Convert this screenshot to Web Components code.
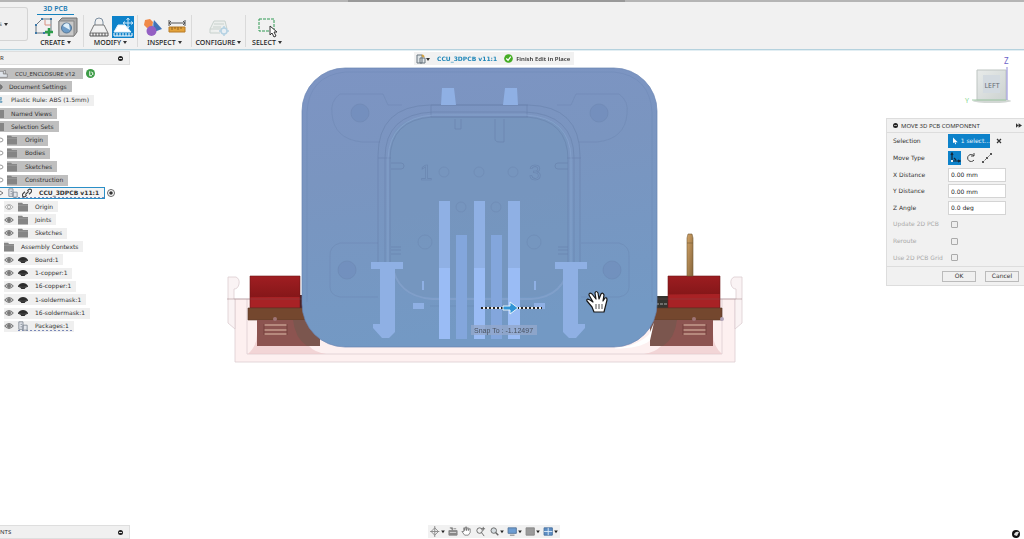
<!DOCTYPE html>
<html lang="en">
<head>
<meta charset="utf-8">
<title>3D PCB</title>
<style>
html,body{margin:0;height:100%;background:#fff}
body{font:6px/8px "DejaVu Sans","Noto Sans",sans-serif;color:#333;overflow:hidden}
</style>
</head>
<body>
<cad-app></cad-app>
<script>
const define=(name,css,html,setup)=>{
  const t=document.createElement('template');
  t.innerHTML=`<style>*{box-sizing:border-box}svg{display:block}button,input{font:inherit;color:inherit;margin:0}button{border:0;padding:0;background:none}${css}</style>${html}`;
  customElements.define(name,class extends HTMLElement{
    constructor(){super();this.attachShadow({mode:'open'}).append(t.content.cloneNode(true));}
    connectedCallback(){if(setup)setup(this,this.shadowRoot);}
  });
};

/* Shared 12x12 glyphs */
const glyphs={
  eye:'<path d="M1 6Q6 0 11 6Q6 12 1 6Z" fill="#d4d4d4" stroke="#777" stroke-width="1.300"/><circle cx="6" cy="6" r="2.400" fill="#777"/>',
  off:'<path d="M1 6Q6 0 11 6Q6 12 1 6Z" fill="none" stroke="#aaa"/><circle cx="6" cy="6" r="2" fill="none" stroke="#aaa"/>',
  folder:'<path d="M0 1h5l1 1.500h6v9H0Z" fill="#858585"/><path d="M0 4h12" stroke="#a5a5a5" stroke-width=".7"/>',
  body:'<path d="M0 6Q2 2.500 6 2.500T12 6v1L9 8 8 9.500H4L3 8 0 7Z" fill="#2c2c2c"/><path d="M1 6.500l5 1 5-1" stroke="#666" stroke-width=".6" fill="none"/>',
  part:'<path d="M1 1h5v9H1zM6 5h5v6H6zM3 4h2M3 7h2" fill="#e2e5ea" stroke="#7d8590"/>',
  link:'<path d="M5.500 8.500L4 10a2 2 0 0 1-3-3l2.500-2.500M6.500 3.500L8 2a2 2 0 0 1 3 3L8.500 7.500M4 8l4-4" fill="none" stroke="#444" stroke-width="1.500"/>',
  doc:'<path d="M0 2h5v4h6v5H0M5 2l3-2v6" fill="#dfe4ea" stroke="#777"/>',
  gear:'<path d="M-4 6a4 4 0 1 0 8 0a4 4 0 1 0-8 0M0 1v10M-4 6h9" fill="none" stroke="#555" stroke-width="1.600"/>',
  rule:'<path d="M0 1h3v4H0M0 8h4v3H0M0 5v3" fill="#8cb5cf" stroke="#4a89ab"/>'
};
const glyph=(n,s=10)=>`<svg class="g" width="${s}" height="${s}" viewBox="0 0 12 12">${glyphs[n]}</svg>`;

define('ribbon-group',`
:host{display:flex;flex-direction:column;justify-content:flex-end;align-items:center;border-right:1px solid #dadada;height:32px;width:54px}
:host([first]){width:56px}:host([last]){border:0;width:42px}
.icons{display:flex;gap:2px;height:22px;align-items:center}
button{font:500 7px/8px "Noto Sans",sans-serif;color:#222;white-space:nowrap;height:9px}
i{display:inline-block;border:2px solid transparent;border-top:3px solid #333;border-bottom:0;margin-left:2px;vertical-align:1px}
`,`<div class="icons"><slot></slot></div><button><span></span><i></i></button>`,(h,r)=>r.querySelector('span').textContent=h.getAttribute('label'));

define('ribbon-bar',`
:host{display:grid;grid-template-columns:28px 1fr;height:50px;background:linear-gradient(90deg,#b5b5b5 34%,#999 34% 61%,#b5b5b5 61%) 0 0/100% 2px no-repeat #f1f1f1;padding-top:2px;border-bottom:1px solid #b5d2de;box-shadow:0 1px #e2eef3}
.space{display:flex;align-items:center;gap:2px;height:34px;margin-top:5px;width:28px;border:1px solid #d4d4d4;border-left:0;border-radius:0 3px 3px 0;background:#efefef}
.space span{width:2px;overflow:hidden;direction:rtl}
.space i{border:2px solid transparent;border-top:3px solid #333;border-bottom:0}
.tools{display:flex;flex-direction:column}
.tab{align-self:flex-start;margin-left:9px;width:37px;height:13px;border-bottom:1px solid #1682bd;color:#1779b1;font:600 7px/9px "Noto Sans",sans-serif;text-align:center;padding-top:2px;text-decoration:none}
.groups{display:flex}
ribbon-group svg{width:22px;height:22px}
.on{background:#0d82ca}
`,`
<button class="space"><span>s</span><i></i></button>
<div class="tools"><a class="tab" href="#">3D PCB</a><div class="groups">
<ribbon-group first label="CREATE">
<svg viewBox="0 0 22 22"><path d="M3 17V9l6-6h9v12M3 17h12" fill="none" stroke="#6b7680" stroke-width="1"/><path d="M12 4v5h6" fill="none" stroke="#d89080"/><g fill="#3d78a8"><path d="M2 16h2v2H2zM2 8h2v2H2zM8 2h2v2H8zM17 2h2v2h-2zM10 16h2v2h-2z"/></g><path d="M16 12v8M12 16h8" stroke="#2c9c4b" stroke-width="2.500"/></svg>
<svg viewBox="0 0 22 22"><path d="M2 5l3-3h15v14l-3 4H2Z" fill="#aaa" stroke="#737373"/><path d="M2 5h15v15H2Z" fill="#c9c9c9" stroke="#858585"/><circle cx="9.500" cy="12" r="5" fill="#6d9cc8" stroke="#557796"/><path d="M6 10a4 4 0 0 1 6-2l1 6" fill="#deeffa"/></svg>
</ribbon-group>
<ribbon-group label="MODIFY">
<svg viewBox="0 0 22 22"><path d="M7 6a4 4 0 0 1 8 0v4M7 6v4" fill="none" stroke="#7b8ea0"/><path d="M6 9h10l4 8H2Z" fill="#f2f2f2" stroke="#777"/><path d="M2 17v3h18v-3M5 17v3M8 17v3M11 17v3M14 17v3M17 17v3" stroke="#555" fill="none"/></svg>
<svg class="on" viewBox="0 0 22 22"><path d="M6 9h7l6 7H2Z" fill="#fff" stroke="#e3f1fa"/><path d="M2 17v3h18v-3M5 17v3M8 17v3M11 17v3M14 17v3M17 17v3" stroke="#fff" fill="none"/><path d="M16 2v10M11 7h10M14.500 4L16 2l1.500 2M14.500 10l1.500 2 1.500-2M13 5.500L11 7l2 1.500M19 5.500L21 7l-2 1.500" stroke="#c6e4f7" fill="none"/></svg>
</ribbon-group>
<ribbon-group label="INSPECT">
<svg viewBox="0 0 22 22"><path d="M12 4l8 9-8 3Z" fill="#4273b6"/><path d="M12 4l-3 10 3 2Z" fill="#6e9bd2"/><path d="M3 4l5-1 3 3-1 5-5 1-3-3Z" fill="#f08a49"/><circle cx="9.500" cy="15" r="5" fill="#9460c3"/></svg>
<svg viewBox="0 0 22 22"><path d="M3 4v6M19 4v6M3 7h16M5 5L3 7l2 2M17 5l2 2-2 2" stroke="#555" fill="none"/><path d="M3 11h16v5H3Z" fill="#e3a23a" stroke="#b77a26"/><path d="M6 11v3M9 11v2M12 11v3M15 11v2" stroke="#916321"/></svg>
</ribbon-group>
<ribbon-group label="CONFIGURE">
<svg viewBox="0 0 22 22" opacity=".4"><path d="M6 5h11l2 8H2ZM2 13v4h10M6 8h10M5 11h8" fill="#e5eee8" stroke="#8da49a"/><circle cx="16" cy="15" r="3" fill="#dceefa" stroke="#5da5d0" stroke-width="1.500"/><path d="M16 10v2M16 18v2M11 15h2M19 15h2" stroke="#5da5d0" stroke-width="1.500"/></svg>
</ribbon-group>
<ribbon-group last label="SELECT">
<svg viewBox="0 0 22 22"><path d="M3 3h15v12H3Z" fill="none" stroke="#319a55" stroke-dasharray="3 1"/><path d="M14 10v9l2-2 2 4 2-1-2-4h3Z" fill="#fff" stroke="#333"/></svg>
</ribbon-group>
</div></div>`);

define('title-strip',`
:host{display:flex;align-items:center;justify-content:space-between;width:130px;height:14px;background:#f0f0f0;border:1px solid #dedede;border-left:0;padding-right:6px;font:6px/8px "Noto Sans",sans-serif}
button{width:5px;height:5px;border-radius:50%;background:#222;display:grid;place-items:center}
button::after{content:"";width:3px;height:1px;background:#ddd}
`,`<span><slot></slot></span><button aria-label="Collapse"></button>`);

define('tree-row',`
:host{display:flex;align-items:center}
.chip{display:flex;align-items:center;height:11px;background:#efefef;padding-right:5px;white-space:nowrap}
.chip.dark{background:#bfbfbf}
.g{flex:none}
.current{border:1px solid #2b8fc7;border-left:0;background:#f4f4f4;font-weight:700;height:12px}
.caps{font-family:"Noto Sans",sans-serif;padding-right:8px}
.wavy{background-image:repeating-linear-gradient(90deg,#7a88b8 0 2px,transparent 2px 4px);background-size:calc(100% - 14px) 1px;background-position:14px 9px;background-repeat:no-repeat}
`,`<span class="chip"></span>`,(h,r)=>{
  const c=r.querySelector('.chip'),k=h.getAttribute('kind');
  const T=h.getAttribute('label');
  const text=x=>`<span class="t" style="margin-left:${x}px">${T}</span>`;
  const gap='<span style="width:4px"></span>';
  const kinds={
    doc:['dark caps','0',glyph('doc',8)+text(7)],
    gear:['dark','0',glyph('gear',6)+text(3)],
    rule:['light','0',glyph('rule',6)+text(5)],
    set:['dark','0',`<svg class="g" width="4" height="9"><path d="M0 1h4v8H0z" fill="#858585"/></svg>`+text(7)],
    folder:['dark','0',glyph('folder')+text(8)],
    current:['current wavy','0',`<svg class="g" width="4" height="8"><path d="M0 2l3 2-3 2" fill="none" stroke="#777"/></svg>${gap}${glyph('part')}${gap}${glyph('link')}${text(7)}`],
    off:['light','4',glyph('off')+gap+glyph('folder')+text(7)],
    on:['light','4',glyph('eye')+gap+glyph('folder')+text(7)],
    ctx:['light','4',glyph('folder')+text(7)],
    body:['light','4',glyph('eye')+gap+glyph('body')+text(7)],
    pkg:['light wavy','4',glyph('eye')+gap+glyph('part')+text(7)]
  }[k];
  c.className='chip '+kinds[0];h.style.paddingLeft=kinds[1]+'px';c.innerHTML=kinds[2];
  if(k==='folder')c.insertAdjacentHTML('beforebegin','<svg width="7" height="8"><path d="M0 2q3 0 3 2t-3 2" fill="none" stroke="#999"/></svg>');
  if(k==='doc')c.insertAdjacentHTML('afterend','<svg width="9" height="9" viewBox="0 0 12 12" style="margin-left:3px"><circle cx="6" cy="6" r="6" fill="#3d9c47"/><path d="M5 3v6h3M7 4l2 1v3" fill="none" stroke="#fff" stroke-width="1.300"/></svg>');
  if(k==='current')c.insertAdjacentHTML('afterend','<svg width="10" height="10" viewBox="0 0 10 10" style="margin-left:1px"><circle cx="5" cy="5" r="3.500" fill="#fff" stroke="#666"/><circle cx="5" cy="5" r="1.800" fill="#333"/></svg>');
});

define('browser-tree',`:host{display:block}.rows{display:grid;grid-auto-rows:1fr;height:266px;margin-top:2px}`,
`<title-strip>R</title-strip><div class="rows">${[
['doc','CCU_ENCLOSURE v12'],['gear','Document Settings'],['rule','Plastic Rule: ABS (1.5mm)'],['set','Named Views'],['set','Selection Sets'],['folder','Origin'],['folder','Bodies'],['folder','Sketches'],['folder','Construction'],['current','CCU_3DPCB v11:1'],['off','Origin'],['on','Joints'],['on','Sketches'],['ctx','Assembly Contexts'],['body','Board:1'],['body','1-copper:1'],['body','16-copper:1'],['body','1-soldermask:1'],['body','16-soldermask:1'],['pkg','Packages:1']
].map(([k,l])=>`<tree-row kind="${k}" label="${l}"></tree-row>`).join('')}</div>`);

define('edit-bar',`
:host{display:flex;align-items:center;height:13px;width:160px;background:#f1f1f1;padding:0 2px;white-space:nowrap}
a{color:#2288b9;text-decoration:none;margin:0 7px;font-weight:700}
button{display:flex;align-items:center;gap:3px;font:600 6px/8px "Noto Sans",sans-serif}
`,`
<svg width="14" height="10" viewBox="0 0 14 10"><path d="M1 1h5v8H1zM4 4h5v5H4z" fill="#dfe5e8" stroke="#68757e"/><path d="M6 1l2 2" stroke="#d0a040" stroke-width="2"/><path d="M10 4h4l-2 3z" fill="#333"/></svg>
<a href="#">CCU_3DPCB v11:1</a>
<button><svg width="9" height="9" viewBox="0 0 10 10"><circle cx="5" cy="5" r="4.800" fill="#45ad25"/><path d="M2.500 5l2 2 3-4" fill="none" stroke="#fff" stroke-width="1.400"/></svg>Finish Edit in Place</button>`);

define('view-cube',`:host{display:block;width:60px;height:54px}text{font-family:"Noto Sans",sans-serif}`,`
<svg width="60" height="54" viewBox="960 54 60 54">
<defs><linearGradient id="c" x2="1" y2="1"><stop stop-color="#e8ebea"/><stop offset="1" stop-color="#ccd2d0"/></linearGradient></defs>
<ellipse cx="992" cy="101" rx="19" ry="2" fill="#d2d7d4"/>
<path d="M977 70h29v30h-29z" fill="url(#c)" stroke="#bdc4c1"/><path d="M983 75h17v18h-17z" fill="#d3dae0"/>
<path d="M1007 67v33" stroke="#8d87d8"/><path d="M972 100h34" stroke="#a2cda8"/>
<text x="992" y="88" font-size="7" fill="#646b73" text-anchor="middle">LEFT</text>
<text x="1004" y="64" font-size="8" fill="#6b62c8">Z</text><text x="965" y="103" font-size="7" fill="#8ad892">Y</text>
</svg>`);

const mirror=(c,f)=>f+`<g transform="translate(${c} 0) scale(-1 1)">${f}</g>`;
define('model-view',`:host{display:block;min-height:0;min-width:0}svg{width:100%;height:100%}text{font-family:"Liberation Sans",sans-serif}`,`
<svg viewBox="0 51 1024 488" role="img" aria-label="Enclosure model">
<defs>
<linearGradient id="blue" x2=".2" y2="1"><stop stop-color="#7d94c3"/><stop offset=".4" stop-color="#7a95c0"/><stop offset="1" stop-color="#7399c4"/></linearGradient>
<linearGradient id="red" x2=".1" y2="1"><stop stop-color="#a01e22"/><stop offset=".65" stop-color="#861719"/><stop offset=".67" stop-color="#a82225"/><stop offset="1" stop-color="#a82225"/></linearGradient>
<linearGradient id="brass" x2="1" y2="1"><stop stop-color="#d3a466"/><stop offset="1" stop-color="#85643b"/></linearGradient>
</defs>
<g fill="#fdf0f0" stroke="#dccdd0" stroke-width=".8">
<path d="M235 299H735V362H235Z"/><path d="M247 299V354H722V299" fill="none"/>
${mirror(970,'<path d="M228 277h8q4 2 3 7t-5 5v10h1v30l-7-6Z" fill="#faf3f4"/>')}
</g>
<path d="M655 296h13v12h-13z" fill="#34342f"/><path d="M656 304h12" stroke="#aaa" stroke-dasharray="3 1"/>
<path d="M250 276h50v32h-50zM668 276h52v32h-52z" fill="url(#red)" stroke="#701819" stroke-width=".6"/>
<path d="M300 295h8v13h-8z" fill="#4d2225"/>
<path d="M248 308h60v12h-60zM650 308h72v12h-72z" fill="#74472e" stroke="#573929" stroke-width=".6"/>
<path d="M257 320h63v26h-63zM650 320h63v26h-63z" fill="#8c5450"/>
<path d="M293 320q2 18 14 26h13v-26zM677 320q-2 18-14 26h-13v-26z" fill="#7b564e"/>
<path d="M248 354q9-8 9-20v12h52q5 6 17 8zM722 354q-9-8-9-20v12h-52q-5 6-17 8z" fill="#ecc9cb" opacity=".7"/>
<path d="M264 325h23M264 330h23M264 334h23M683 325h23M683 330h23M683 334h23" stroke="#c39b8c" stroke-width="1.300"/>
<path d="M264 324v11M287 324v11M683 324v11M706 324v11" stroke="#75413d"/><circle cx="275" cy="319" r="2" fill="#9f7475"/><circle cx="694" cy="319" r="2" fill="#9f7475"/><circle cx="722" cy="319" r="2" fill="#b0a3b8"/>
<path d="M687 276v-38l1-4h4l1 4v38z" fill="url(#brass)" stroke="#745a38" stroke-width=".6"/><path d="M687 243h6" stroke="#745a38" stroke-width=".6"/>
<path d="M227 299h515" stroke="#7a5155" opacity=".35"/>
<path d="M615 347.500q20 0 34-13l5-12-4 18q-10 8-35 8z" fill="#fff"/>
<rect x="302" y="68" width="355" height="279" rx="43" fill="url(#blue)" stroke="#6984b3" stroke-width=".7"/>
<path d="M307 302V112q2-36 38-40h269q36 4 38 40v190" fill="none" stroke="#6f89b7" stroke-width=".5"/>
<path d="M390 150q0-33 42-33h95q41 0 41 33v110q-3 37-40 37h-98q-37 0-40-37Z" fill="#7595bd" opacity=".65"/>
<g fill="none" stroke="#647da8" stroke-width=".6" opacity=".8">
<path d="M378 262V156q0-50 52-51h98q52 1 52 51v106"/>
<path d="M385 262V158q0-44 48-46h92q49 2 49 46v104"/>
<path d="M390 262V160q0-40 42-43h95q41 3 41 43v102"/>
<path d="M378 158h13M567 158h14M431 105v12M527 105v12M431 105h97M431 117h97"/>
<path d="M455 119v10h6v-10M495 119v20q0 3 5 3h4v-23"/>
${mirror(959,'<path d="M391 163h10q3 0 3 3t-3 3h-10M391 247h10M391 250h10M391 254h10"/>')}
</g>
<g fill="none" stroke="#647da8" stroke-width=".6" opacity=".5">
${mirror(959,'<path d="M383 94h-43q-10 7-8 20 2 25 30 28h18M383 94l5 11h14"/><path d="M340 243h38M340 243q-11 3-10 14v30q0 8 10 10h38"/>')}
<circle cx="444" cy="172" r="5"/><circle cx="479" cy="172" r="5"/><circle cx="513" cy="172" r="5"/><circle cx="461" cy="207" r="5"/><circle cx="496" cy="207" r="5"/>
<circle cx="425" cy="242" r="7"/><circle cx="534" cy="242" r="7"/>
</g>
<g fill="#718cbb" stroke="#647da8" stroke-width=".6" opacity=".6">${mirror(959,'<circle cx="360" cy="113" r="9"/><circle cx="347" cy="270" r="9"/>')}</g>
<g fill="none" stroke="#86a3cd" stroke-width=".8"><path d="M388 262v-104q2-40 45-43h93q44 3 45 43v104"/><path d="M392 263q4 33 40 36h99q34-2 38-36" stroke-width="2" opacity=".7"/><path d="M430 306h106" stroke="#6c87b2" opacity=".6"/></g>
<g font-size="22" fill="none" stroke="#647da8" stroke-width=".6" opacity=".7"><text x="420" y="180">1</text><text x="529" y="180">3</text></g>
<g fill="#8fb0e4">
<path d="M442 88h12l2 17h-15zM505 88h12l1 17h-15z"/>
<path d="M439 201h11v138h-11zM474 201h11v138h-11zM508 201h12v138h-12z"/>
<path d="M456 235h11v104h-11zM491 235h11v104h-11z" fill="#83a6dc"/>
<path d="M439 268h11v71h-11zM474 268h11v71h-11zM508 268h12v71h-12z" fill="#9abcf5"/>
${mirror(958,'<path d="M371 262h32v7h-8v63l-6 6h-7l-9-10v-4h7v-55h-9z"/><path d="M422 281h2v9h-2zM413 303h11v6h-11z"/>')}
</g>
<path d="M481 308h61" stroke="#eee" stroke-width="2"/><path d="M481 308h61" stroke="#222" stroke-width="2" stroke-dasharray="2 2"/>
<path d="M503 306h7v-4l8 6-8 6v-4h-7z" fill="#3194d5" stroke="#e7f3fa"/>
<rect x="471" y="325" width="66" height="10" fill="#93a8cc" opacity=".8"/><text x="474" y="333" font-size="7" fill="#495361">Snap To : -1.12497</text>
<path d="M594 312l-2-5-5-6q-1-3 3-1l3 2-4-7q0-3 3-1l4 5-1-6q1-3 3 0l1 6 2-5q2-2 3 1l-1 6 2-3q2-1 2 2l-3 12z" fill="#fff" stroke="#181818" stroke-width="1.200" stroke-linejoin="round"/><path d="M596 304v5M599 304v5M602 304v5" stroke="#222" stroke-width=".8"/>
</svg>`);

define('form-row',`:host{display:grid;grid-template-columns:55px 1fr;align-items:center}
label{white-space:nowrap}:host([off]) label{color:#aaa}
.f{display:flex;align-items:center}
input[type=text]{width:58px;height:14px;border:1px solid #d4d4d4;background:#fff;padding:0 2px;color:#222;font:6px/8px "DejaVu Sans",sans-serif}
input[type=checkbox]{appearance:none;width:7px;height:7px;border:1px solid #aaa;border-radius:1px;background:#eee;margin-left:3px}
`,`<label for="i"></label><div class="f"><slot></slot></div>`,(h,r)=>{
  const l=r.querySelector('label');l.textContent=h.getAttribute('label');
  if(h.hasAttribute('value')||h.hasAttribute('off')){const i=document.createElement('input');i.id='i';i.type=h.hasAttribute('off')?'checkbox':'text';if(h.hasAttribute('value'))i.value=h.getAttribute('value');else i.disabled=true;r.querySelector('.f').append(i);}
});

define('move-dialog',`
:host{display:block;width:138px;background:#f1f1f1;border:1px solid #ddd;border-right:0;color:#333}
header{display:flex;align-items:center;gap:3px;height:14px;border-bottom:1px solid #ddd;padding:0 2px 0 6px;font:6px/8px "Noto Sans",sans-serif}
header span{flex:1}
.rows{display:grid;grid-auto-rows:1fr;height:133px;padding-left:6px}
.sel{display:flex;align-items:center;gap:3px;width:42px;height:14px;background:#0d82ca;color:#e4f3fc;padding-left:5px;white-space:nowrap}
.x{width:8px;height:8px;margin-left:5px}
.m{width:13px;height:14px;margin-right:3px;display:grid;place-items:center}.on{background:#0d82ca}
footer{display:flex;justify-content:flex-end;align-items:center;gap:9px;height:19px;border-top:1px solid #ddd;padding-right:5px}
footer button{width:34px;height:11px;border:1px solid #bbb;background:#f0f0f0;text-align:center}
`,`
<header><svg width="5" height="5"><circle cx="2.500" cy="2.500" r="2.500" fill="#222"/><path d="M1 2.500h3" stroke="#ddd" stroke-width=".7"/></svg><span>MOVE 3D PCB COMPONENT</span><svg width="6" height="5" viewBox="0 0 7 5"><path d="M0 0l3 2.500L0 5zM3 0l4 2.500L3 5z" fill="#333"/></svg></header>
<div class="rows">
<form-row label="Selection"><button class="sel"><svg width="5" height="8" viewBox="0 0 6 9"><path d="M0 0v7l2-1 1 3 1-1-1-2h3z" fill="#fff"/></svg>1 select...</button><button class="x" aria-label="Clear"><svg width="8" height="8"><path d="M2 2l4 4M6 2L2 6" stroke="#333" stroke-width="1.200"/></svg></button></form-row>
<form-row label="Move Type"><button class="m on" aria-label="Free move"><svg width="12" height="12"><path d="M3 1v8h8M2 3l1-2 1 2M9 8l2 1-2 1M5 6l2 2" fill="none" stroke="#152838" stroke-width="1.200"/><path d="M2 8h2v2H2z" fill="#eee"/></svg></button><button class="m" aria-label="Rotate"><svg width="12" height="12"><path d="M9 4a3.500 3.500 0 1 0 0 4M9 1v3H6" fill="none" stroke="#444"/></svg></button><button class="m" aria-label="Point to point"><svg width="12" height="12"><path d="M2 10l8-8" stroke="#555" stroke-dasharray="2 1"/><path d="M1 9h2v2H1zM9 1h2v2H9zM5 5h2v2H5z" fill="#555"/></svg></button></form-row>
<form-row label="X Distance" value="0.00 mm"></form-row><form-row label="Y Distance" value="0.00 mm"></form-row><form-row label="Z Angle" value="0.0 deg"></form-row>
<form-row label="Update 2D PCB" off></form-row><form-row label="Reroute" off></form-row><form-row label="Use 2D PCB Grid" off></form-row>
</div><footer><button>OK</button><button>Cancel</button></footer>`);

const dd='<path d="M12 5h4l-2 3z" fill="#222"/>';
define('nav-bar',`:host{display:flex;align-items:center;justify-content:space-between;height:13px;width:132px;background:#f1f1f1;padding:0 2px}button{flex:none}`,
[[16,'<path d="M1 6l4-4 4 4-4 4zM5 0v12M0 6h10" fill="none" stroke="#888"/>'+dd],
[11,'<path d="M1 5h9v5H1zM2 2h3v3M6 3h3" fill="#888" stroke="#888"/><path d="M2 7h7" stroke="#ddd"/>'],
[12,'<path d="M4 10L1 6l2 0V2h1v3l1-4h1v4l1-3h1v3l1-2h1v4L8 10z" fill="#fff" stroke="#666" stroke-width=".8"/>'],
[12,'<circle cx="5" cy="5" r="3" fill="none" stroke="#666"/><path d="M7 7l3 4M9 1v4M7 3h4" stroke="#666"/>'],
[16,'<circle cx="5" cy="5" r="3" fill="#d5dce0" stroke="#666"/><path d="M7 7l3 3" stroke="#666" stroke-width="1.500"/>'+dd],
[16,'<path d="M1 2h9v6H1z" fill="#6d9dd2" stroke="#56779d"/><path d="M3 10h5" stroke="#777"/>'+dd],
[16,'<path d="M1 2h9v8H1z" fill="#9a9a9a" stroke="#888"/>'+dd],
[16,'<path d="M1 2h9v8H1z" fill="#5d8fc6" stroke="#47709d"/><path d="M5.500 2v8M1 6h9" stroke="#dceaf7"/>'+dd]
].map(([w,p],i)=>`<button aria-label="${['Orbit','Look at','Pan','Zoom','Fit','Display','Grid','Viewports'][i]}"><svg width="${w-1}" height="11" viewBox="0 0 ${w} 12">${p}</svg></button>`).join(''));

define('cad-app',`
:host{display:grid;grid-template-rows:50px 1fr;height:100vh}
ribbon-bar{position:relative;z-index:1}
main{display:grid;grid-template-columns:130px 1fr 166px;grid-template-rows:1fr 14px;padding-top:1px;min-height:0}
model-view{grid-area:1/1/3/4}
browser-tree{grid-area:1/1;z-index:1}
edit-bar{grid-area:1/2;justify-self:center;align-self:start;margin-top:1px;z-index:1}
aside{grid-area:1/3;display:flex;flex-direction:column;align-items:flex-end;gap:10px;padding-top:3px;z-index:1}
view-cube{margin-right:4px}
title-strip{grid-area:2/1;z-index:1}nav-bar{grid-area:2/2;justify-self:center;z-index:1}
.help{grid-area:2/3;justify-self:end;margin:4px 3px 0 0;z-index:1}
`,`<ribbon-bar></ribbon-bar><main><model-view></model-view><browser-tree></browser-tree><edit-bar></edit-bar>
<aside><view-cube></view-cube><move-dialog></move-dialog></aside>
<title-strip>NTS</title-strip><nav-bar></nav-bar>
<button class="help" aria-label="Assistant"><svg width="10" height="10"><circle cx="5" cy="5" r="4" fill="#111"/><path d="M3 6q1-4 5-3L6 7Z" fill="#ddd"/></svg></button></main>`);
</script>
</body>
</html>
